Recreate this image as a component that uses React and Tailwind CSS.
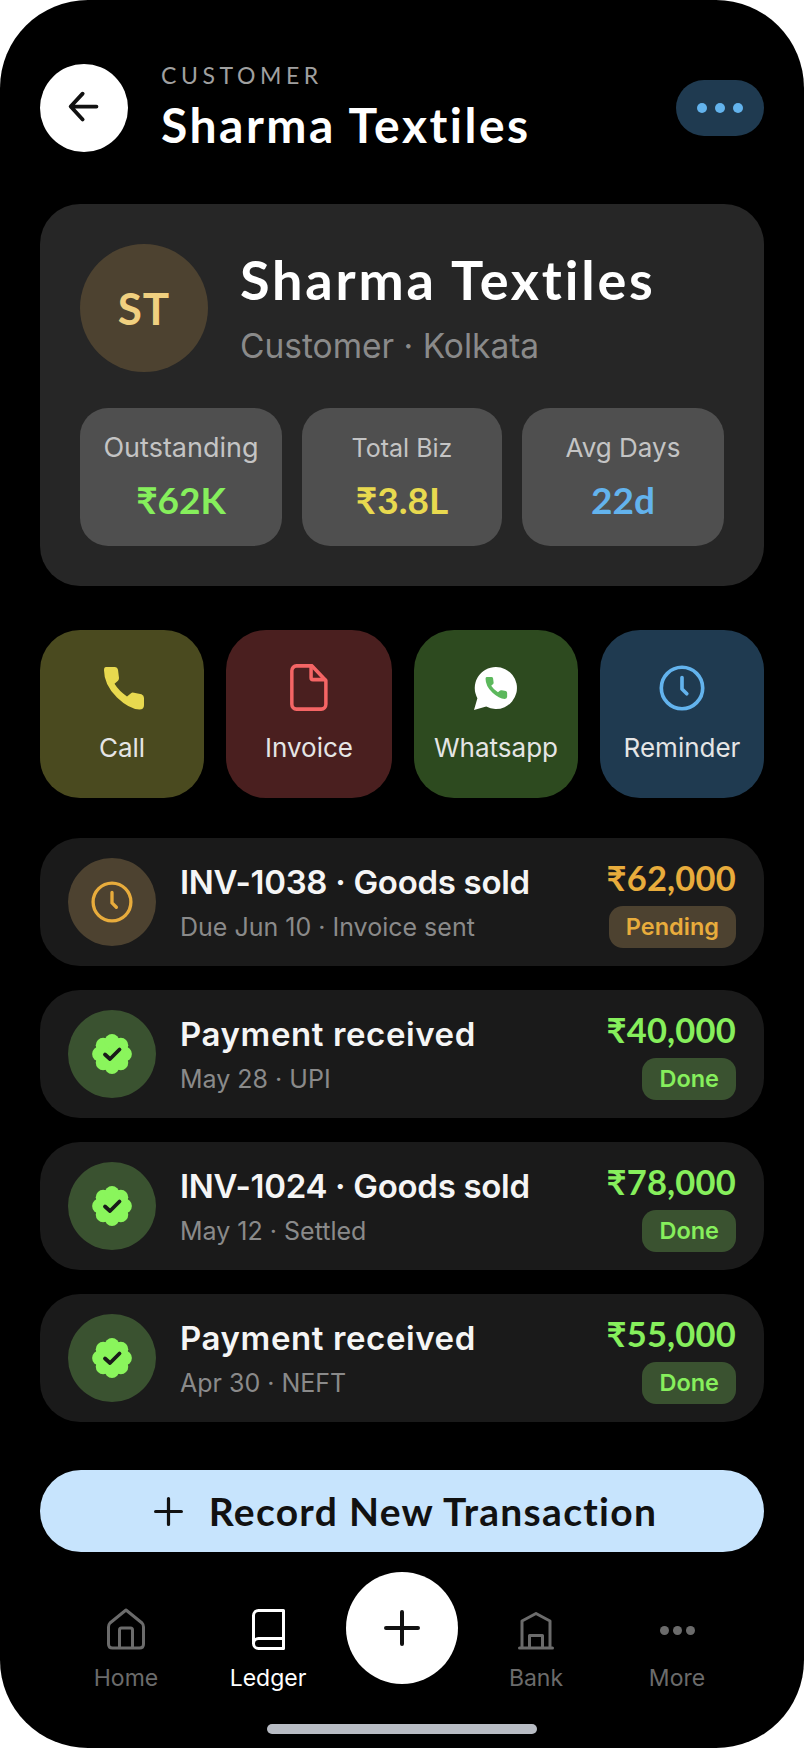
import React from "react";

const head = "font-['Lato',sans-serif]";
const body = "font-['Inter',sans-serif]";

const HANDSET =
  "M3 1H12Q14.500 1 15 3.500L16 11.500Q16 13 15 14L11.500 17Q16 24 24 29L28 26Q29 25 31 25.500L38.500 27Q41 28 41 30.500V37.500Q41 41.500 36.500 41.500Q26 41 14 30Q1 18 1 4Q1 1 3 1z";

const BackIcon = () => (
  <svg width="36" height="36" viewBox="0 0 36 36" fill="none" stroke="#111" strokeWidth="4.200" strokeLinecap="round" strokeLinejoin="round">
    <path d="M32 18H5M17 4 4 18l13 14" transform="translate(1 0) scale(0.92)" />
  </svg>
);

const PhoneIcon = () => (
  <svg className="ml-1" width="42" height="44" viewBox="0 0 42 42" fill="#e8d94f" preserveAspectRatio="none">
    <path d={HANDSET} />
  </svg>
);

const FileIcon = () => (
  <svg width="42" height="48" viewBox="0 0 42 48" fill="none" stroke="#f56565" strokeWidth="3.800" strokeLinejoin="round" strokeLinecap="round">
    <path d="M7 2h17l15 15v24a5 5 0 0 1-5 5H7a5 5 0 0 1-5-5V7a5 5 0 0 1 5-5z" transform="translate(2 0) scale(0.92 0.98)" />
    <path d="M24 2v12a2 2 0 0 0 2 2h13" transform="translate(1 0) scale(0.92 0.98)" />
  </svg>
);

const WhatsappIcon = () => (
  <svg width="48" height="48" viewBox="0 0 48 48">
    <path fill="#fff" d="M24 3a21 21 0 1 1-9.800 39.600L2 46l3.400-11.800A21 21 0 0 1 24 3z" />
    <path fill="#5cb85c" d={HANDSET} transform="translate(13 12.500) scale(0.54)" />
  </svg>
);

const ClockIcon = ({ color, size = 46 }) => (
  <svg width={size} height={size} viewBox="0 0 24 24" fill="none" stroke={color} strokeWidth="1.900" strokeLinecap="round" strokeLinejoin="round">
    <circle cx="12" cy="12" r="10.800" />
    <path d="M12 6.500V12.500l2.500 2.500" />
  </svg>
);

const LOBES = [0, 45, 90, 135, 180, 225, 270, 315];

const BadgeIcon = () => (
  <svg width="40" height="40" viewBox="0 0 40 40">
    <circle cx="20" cy="20" r="15" fill="#8af55c" />
    {LOBES.map((deg) => (
      <circle
        key={deg}
        cx={20 + 12.5 * Math.cos((deg * Math.PI) / 180)}
        cy={20 + 12.5 * Math.sin((deg * Math.PI) / 180)}
        r="7.400"
        fill="#8af55c"
      />
    ))}
    <path d="M13 20.500l5 4.500 9.500-9.500" fill="none" stroke="#1a1a1a" strokeWidth="3.800" strokeLinecap="round" strokeLinejoin="round" />
  </svg>
);

const PlusIcon = ({ size, sw = 3.500 }) => (
  <svg width={size} height={size} viewBox="0 0 36 36" fill="none" stroke="#111" strokeWidth={sw} strokeLinecap="round">
    <path d="M18 2v32M2 18h32" />
  </svg>
);

const HomeIcon = () => (
  <svg width="38" height="42" viewBox="0 0 38 42" fill="none" stroke="#6b6b6b" strokeWidth="3" strokeLinejoin="round">
    <path d="M19 2 35 15Q36.500 16.500 36.500 19V36Q36.500 40 32.500 40H5.500Q1.500 40 1.500 36V19Q1.500 16.500 3 15z" />
    <path d="M12.500 40V22Q12.500 20 14.500 20H23.500Q25.500 20 25.500 22V40" />
  </svg>
);

const BookIcon = () => (
  <svg width="33" height="41" viewBox="0 0 33 41" fill="none" stroke="#fff" strokeWidth="3" strokeLinejoin="round">
    <path d="M31.500 1.500H6.500a5 5 0 0 0-5 5v28a5 5 0 0 0 5 5h25z" />
    <path d="M1.500 34a5 5 0 0 1 5-4.500h25" />
  </svg>
);

const BankIcon = () => (
  <svg width="36" height="38" viewBox="0 0 36 38" fill="none" stroke="#6b6b6b" strokeWidth="3" strokeLinejoin="round">
    <path d="M4 36V9L18 1.500 32 9v27" />
    <path d="M11.500 36V23.500H24.500V36" />
    <path d="M1.500 36h33" strokeLinecap="round" />
  </svg>
);

const stats = [
  { label: "Outstanding", value: "₹62K", color: "text-[#86ef5c]", w: "w-[202px]", size: "text-[27px]" },
  { label: "Total Biz", value: "₹3.8L", color: "text-[#e8d94f]", w: "w-[200px]", size: "text-[25px]" },
  { label: "Avg Days", value: "22d", color: "text-[#63b3ed]", w: "w-[202px]", size: "text-[26px]" },
];

const actions = [
  { label: "Call", bg: "bg-[#4a4a1f]", w: "w-[164px]", icon: <PhoneIcon /> },
  { label: "Invoice", bg: "bg-[#4a1f1f]", w: "w-[166px]", icon: <FileIcon /> },
  { label: "Whatsapp", bg: "bg-[#2d4a1f]", w: "w-[164px]", icon: <WhatsappIcon /> },
  { label: "Reminder", bg: "bg-[#1f3a50]", w: "w-[164px]", icon: <ClockIcon color="#63b3ed" /> },
];

const rows = [
  { title: "INV-1038 · Goods sold", sub: "Due Jun 10 · Invoice sent", amount: "₹62,000", status: "Pending", pending: true },
  { title: "Payment received", wide: true, sub: "May 28 · UPI", amount: "₹40,000", status: "Done" },
  { title: "INV-1024 · Goods sold", sub: "May 12 · Settled", amount: "₹78,000", status: "Done" },
  { title: "Payment received", wide: true, sub: "Apr 30 · NEFT", amount: "₹55,000", status: "Done" },
];

const Row = ({ title, wide, sub, amount, status, pending }) => (
  <div className="flex h-[128px] items-center rounded-[40px] bg-[#1a1a1a] pl-7 pr-7">
    <div className={`flex h-[88px] w-[88px] shrink-0 items-center justify-center rounded-full ${pending ? "bg-[#4d4230]" : "bg-[#3a5230]"}`}>
      {pending ? <ClockIcon color="#e8ac3c" size={42} /> : <BadgeIcon />}
    </div>
    <div className="ml-6 min-w-0 flex-1">
      <div className={`${body} text-[33px] leading-[44px] font-semibold ${wide ? "tracking-[0.6px]" : "tracking-[-0.3px]"} text-[#f5f5f5]`}>{title}</div>
      <div className={`${body} mt-[6px] text-[25px] leading-[34px] text-[#8a8a8a]`}>{sub}</div>
    </div>
    <div className="flex flex-col items-end">
      <div className={`${head} text-[34.5px] leading-[42px] font-bold tracking-[0.2px] ${pending ? "text-[#e8ac3c]" : "text-[#86ef5c]"}`}>{amount}</div>
      <div className={`${body} mt-[7px] flex h-[42px] items-center rounded-[14px] px-[17px] text-[23.5px] font-semibold ${pending ? "bg-[#4d4230] text-[#e8ac3c]" : "bg-[#3a5230] text-[#86ef5c]"}`}>
        {status}
      </div>
    </div>
  </div>
);

const NavItem = ({ icon, label, active, w }) => (
  <div className={`flex ${w} flex-col items-center`}>
    <div className="flex h-[44px] items-end">{icon}</div>
    <div className={`${body} mt-[13px] text-[23px] leading-[30px] ${active ? "text-white" : "text-[#6b6b6b]"}`}>{label}</div>
  </div>
);

export default function App() {
  return (
    <div className="h-[1748px] w-[804px] bg-white">
      <div className="flex h-full flex-col rounded-[88px] bg-black px-10 pt-16">
        {/* Header */}
        <div className="flex h-[88px] items-center">
          <div className="flex h-[88px] w-[88px] items-center justify-center rounded-full bg-white">
            <BackIcon />
          </div>
          <div className="ml-[33px] flex-1">
            <div className={`${head} text-[23px] leading-[24px] tracking-[4.6px] text-[#a0a0a0]`}>CUSTOMER</div>
            <div className={`${head} mt-[10px] text-[48px] leading-[56px] font-bold tracking-[2.5px] text-white`}>Sharma Textiles</div>
          </div>
          <div className="flex h-[56px] w-[88px] items-center justify-center gap-2 rounded-full bg-[#1f3a50]">
            <span className="h-[10px] w-[10px] rounded-full bg-[#63b3ed]" />
            <span className="h-[10px] w-[10px] rounded-full bg-[#63b3ed]" />
            <span className="h-[10px] w-[10px] rounded-full bg-[#63b3ed]" />
          </div>
        </div>

        {/* Profile card */}
        <div className="mt-[52px] h-[382px] rounded-[40px] bg-[#262626] px-10 pt-10">
          <div className="flex h-[128px] items-center">
            <div className={`${head} flex h-[128px] w-[128px] items-center justify-center rounded-full bg-[#4d4230] text-[44px] font-bold tracking-[1px] text-[#f0d080]`}>
              ST
            </div>
            <div className="ml-[32px]">
              <div className={`${head} text-[54px] leading-[66px] font-bold tracking-[2.8px] text-white`}>Sharma Textiles</div>
              <div className={`${body} mt-[10px] text-[33.5px] leading-[46px] text-[#8a8a8a]`}>Customer · Kolkata</div>
            </div>
          </div>
          <div className="mt-9 flex justify-between">
            {stats.map((s) => (
              <div key={s.label} className={`flex h-[138px] ${s.w} flex-col items-center rounded-[28px] bg-[#4f4f4f] pt-[23px]`}>
                <div className={`${body} ${s.size} leading-[34px] text-[#c4c4c4]`}>{s.label}</div>
                <div className={`${head} mt-[13px] text-[37px] leading-[44px] font-bold ${s.color}`}>{s.value}</div>
              </div>
            ))}
          </div>
        </div>

        {/* Quick actions */}
        <div className="mt-[44px] flex justify-between">
          {actions.map((a) => (
            <div key={a.label} className={`flex h-[168px] ${a.w} flex-col items-center rounded-[40px] ${a.bg} pt-[34px]`}>
              <div className="flex h-[48px] items-center justify-center">{a.icon}</div>
              <div className={`${body} mt-[19px] text-[26px] leading-[34px] text-[#e5e5e5]`}>{a.label}</div>
            </div>
          ))}
        </div>

        {/* Transactions */}
        <div className="mt-10 flex flex-col gap-6">
          {rows.map((r, i) => (
            <Row key={i} {...r} />
          ))}
        </div>

        {/* Record button */}
        <div className="mt-12 flex h-[82px] shrink-0 items-center justify-center rounded-full bg-[#c7e4fd] pl-[7px]">
          <PlusIcon size={29} sw={4} />
          <span className={`${head} ml-[26px] text-[39px] font-bold tracking-[1.3px] text-[#111]`}>Record New Transaction</span>
        </div>

        {/* Bottom nav */}
        <div className="mt-5 flex h-[112px] shrink-0 items-start">
          <div className="flex gap-[6px] pl-[28px] pt-[34px]">
            <NavItem icon={<HomeIcon />} label="Home" w="w-[116px]" />
            <NavItem icon={<BookIcon />} label="Ledger" active w="w-[156px]" />
          </div>
          <div className="flex h-[112px] w-[112px] shrink-0 items-center justify-center rounded-full bg-white">
            <PlusIcon size={36} sw={4} />
          </div>
          <div className="flex pl-[20px] pt-[34px]">
            <NavItem icon={<BankIcon />} label="Bank" w="w-[116px]" />
            <div className="ml-[25px]">
              <NavItem
                icon={
                  <div className="mb-[15px] flex gap-1">
                    <span className="h-[9px] w-[9px] rounded-full bg-[#6b6b6b]" />
                    <span className="h-[9px] w-[9px] rounded-full bg-[#6b6b6b]" />
                    <span className="h-[9px] w-[9px] rounded-full bg-[#6b6b6b]" />
                  </div>
                }
                label="More"
                w="w-[116px]"
              />
            </div>
          </div>
        </div>

        {/* Home indicator */}
        <div className="mx-auto mt-[40px] h-[10px] w-[270px] shrink-0 rounded-full bg-[#b8bcc4]" />
      </div>
    </div>
  );
}
